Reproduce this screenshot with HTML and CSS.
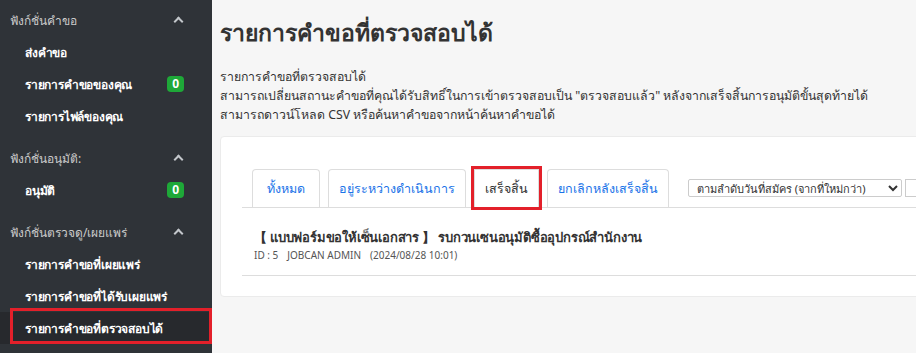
FILE: index.html
```html
<!DOCTYPE html>
<html lang="th">
<head>
  <meta charset="UTF-8" />
  <meta name="viewport" content="width=device-width, initial-scale=1" />
  <title>รายการคำขอที่ตรวจสอบได้</title>
  <link rel="stylesheet" href="styles.css">
</head>
<body>

  <aside class="sidebar">
    <div class="menu-group">
      <div class="menu-head">ฟังก์ชั่นคำขอ <span class="chevron"></span></div>
      <a class="menu-item" href="#">ส่งคำขอ</a>
      <a class="menu-item" href="#">รายการคำขอของคุณ <span class="badge">0</span></a>
      <a class="menu-item" href="#">รายการไฟล์ของคุณ</a>
    </div>
    <div class="menu-group">
      <div class="menu-head">ฟังก์ชั่นอนุมัติ: <span class="chevron"></span></div>
      <a class="menu-item" href="#">อนุมัติ <span class="badge">0</span></a>
    </div>
    <div class="menu-group">
      <div class="menu-head">ฟังก์ชั่นตรวจดู/เผยแพร่ <span class="chevron"></span></div>
      <a class="menu-item" href="#">รายการคำขอที่เผยแพร่</a>
      <a class="menu-item" href="#">รายการคำขอที่ได้รับเผยแพร่</a>
      <a class="menu-item active" href="#">รายการคำขอที่ตรวจสอบได้</a>
    </div>
  </aside>

  <main class="content">
    <h1 class="page-title">รายการคำขอที่ตรวจสอบได้</h1>
    <p class="page-desc">
      รายการคำขอที่ตรวจสอบได้<br>
      สามารถเปลี่ยนสถานะคำขอที่คุณได้รับสิทธิ์ในการเข้าตรวจสอบเป็น "ตรวจสอบแล้ว" หลังจากเสร็จสิ้นการอนุมัติขั้นสุดท้ายได้<br>
      สามารถดาวน์โหลด CSV หรือค้นหาคำขอจากหน้าค้นหาคำขอได้
    </p>

    <section class="card">
      <div class="tab-bar">
        <a class="tab" href="#">ทั้งหมด</a>
        <a class="tab" href="#">อยู่ระหว่างดำเนินการ</a>
        <a class="tab current" href="#">เสร็จสิ้น</a>
        <a class="tab" href="#">ยกเลิกหลังเสร็จสิ้น</a>
        <select class="sort-select">
          <option>ตามลำดับวันที่สมัคร (จากที่ใหม่กว่า)</option>
        </select>
        <input class="search-box" type="text" />
      </div>

      <div class="request-list">
        <div class="request">
          <div class="request-title">【 แบบฟอร์มขอให้เซ็นเอกสาร 】 รบกวนเซนอนุมัติซื้ออุปกรณ์สำนักงาน</div>
          <div class="request-meta">
            <span>ID : 5</span>
            <span>JOBCAN ADMIN</span>
            <span>(2024/08/28 10:01)</span>
          </div>
        </div>
      </div>
    </section>
  </main>

</body>
</html>
```

FILE: styles.css
```css
* {
  box-sizing: border-box;
}
body {
  margin: 0;
  height: 100vh;
  display: flex;
  overflow: hidden;
  font-family: Tahoma, "Noto Sans", "DejaVu Sans", sans-serif;
  background-color: #f6f6f6;
  color: #333;
}

/* Sidebar */
.sidebar {
  width: 212px;
  flex-shrink: 0;
  background-color: #2f3338;
  padding-top: 6px;
}
.menu-group {
  padding-bottom: 12px;
}
.menu-head {
  display: flex;
  justify-content: space-between;
  align-items: center;
  height: 28px;
  margin-bottom: 2px;
  padding: 0 30px 0 10px;
  color: #cbcbcb;
  font-size: 12px;
}
.chevron {
  width: 7px;
  height: 7px;
  border-top: 2px solid #c3c7cb;
  border-left: 2px solid #c3c7cb;
  transform: rotate(45deg);
  margin-top: 2px;
}
.menu-item {
  position: relative;
  display: flex;
  justify-content: space-between;
  align-items: center;
  height: 32px;
  padding: 0 28px 0 25px;
  color: #fff;
  font-size: 12px;
  font-weight: 700;
  letter-spacing: -0.2px;
  text-decoration: none;
}
.menu-item.active {
  background-color: #27292d;
}
/* highlight frame around the current page */
.menu-item.active::after {
  content: "";
  position: absolute;
  top: -4px;
  left: 10px;
  right: 0;
  height: 30px;
  border: 3px solid #e3202a;
}
.badge {
  background-color: #1ea838;
  color: #fff;
  font-size: 12px;
  font-weight: 700;
  border-radius: 4px;
  padding: 1px 5px;
  line-height: 14px;
}

/* Main */
.content {
  flex: 1;
  padding: 0 8px;
  min-width: 0;
}
.page-title {
  font-size: 23px;
  line-height: 30px;
  font-weight: 700;
  margin: 17px 0 20px;
  color: #333;
}
.page-desc {
  font-size: 12.3px;
  line-height: 19px;
  margin: 0 0 12px;
}

.card {
  width: 900px;
  background-color: #fff;
  border: 1px solid #ebebeb;
  border-radius: 4px;
  padding: 32px 21px 20px;
}
.tab-bar {
  display: flex;
  align-items: flex-end;
  gap: 8px;
  padding-left: 10px;
  border-bottom: 1px solid #ddd;
}
.tab {
  display: block;
  height: 38px;
  line-height: 37px;
  padding: 0 10px;
  border: 1px solid #ddd;
  border-bottom: none;
  border-radius: 4px 4px 0 0;
  color: #1a73e8;
  font-size: 12.5px;
  text-decoration: none;
}
.tab:first-child {
  padding: 0 14px;
}
.tab.current {
  color: #333;
  outline: 3px solid #e3202a;
  border-radius: 0;
}
.sort-select {
  align-self: center;
  margin-left: 11px;
  width: 214px;
  height: 18px;
  font-size: 11px;
  font-family: inherit;
  border: 1px solid #ccc;
  border-radius: 2px;
  background-color: #fff;
  color: #333;
  padding: 0 4px;
}
.search-box {
  align-self: center;
  margin-left: -5px;
  width: 80px;
  height: 18px;
  border: 1px solid #ccc;
}

.request {
  padding: 19px 12px 12px;
  border-bottom: 1px solid #ddd;
}
.request-title {
  font-size: 13px;
  line-height: 20px;
  font-weight: 700;
  letter-spacing: -0.2px;
  color: #333;
}
.request-meta {
  display: flex;
  gap: 9px;
  line-height: 16px;
  font-size: 10px;
  color: #555;
}
```
